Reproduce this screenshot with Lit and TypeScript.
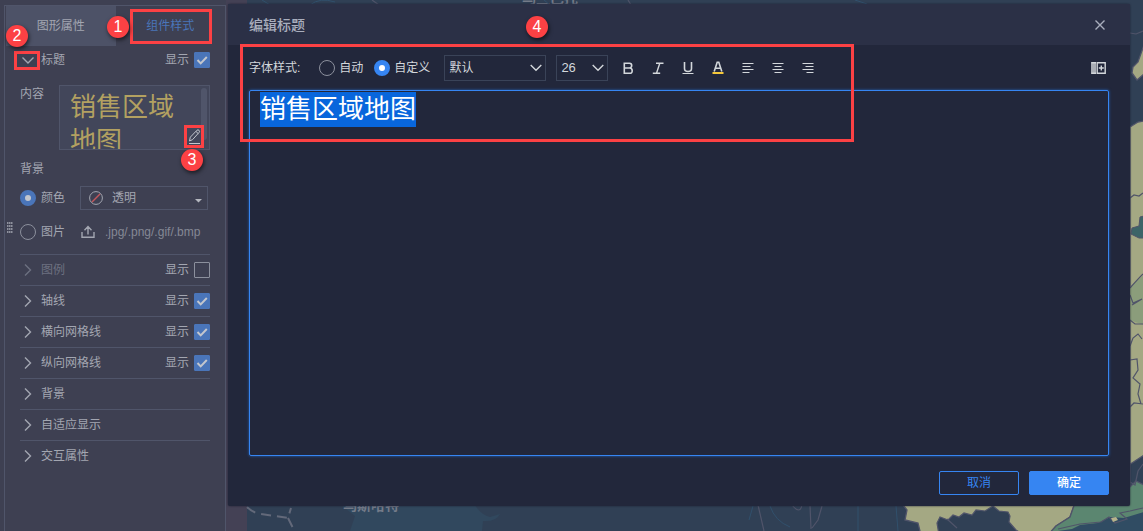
import { LitElement, html, css, svg } from "lit";
import { customElement, property, query, state } from "lit/decorators.js";
import { classMap } from "lit/directives/class-map.js";

const controls = css`
  * {
    box-sizing: border-box;
  }
  button,
  input,
  select,
  textarea {
    font: inherit;
    color: inherit;
    margin: 0;
    padding: 0;
    border: 0;
    background: none;
    border-radius: 0;
  }
  label {
    display: flex;
    align-items: center;
  }
  svg {
    display: block;
    flex: none;
    fill: none;
    stroke: currentColor;
  }
  .radio {
    appearance: none;
    width: 16px;
    height: 16px;
    border: 1px solid #8c909d;
    border-radius: 50%;
  }
  .radio:checked {
    border: 5px solid var(--accent);
    background: var(--dot);
  }
`;

/** Numbered callout marker. */
@customElement("step-badge")
class StepBadge extends LitElement {
  static styles = css`
    :host {
      display: block;
      width: 22px;
      height: 22px;
      border-radius: 50%;
      background: #fc4144;
      color: #fff;
      font: 16px/22px "Liberation Sans", Arial, sans-serif;
      text-align: center;
      box-shadow: 1px 2px 4px rgba(0, 0, 0, 0.6);
    }
  `;
  @property({ type: Number }) step = 1;
  render() {
    return html`${this.step}`;
  }
}

interface Section {
  name: string;
  toggle: boolean;
  shown: boolean;
  disabled?: boolean;
}

@customElement("style-panel")
class StylePanel extends LitElement {
  static styles = [
    controls,
    css`
      :host {
        --accent: #4a75b9;
        --dot: #c3c6cd;
        display: block;
        position: relative;
        padding: 5px 0 0 4px;
        background: #3e4052;
        color: #a3a6b1;
      }
      .body {
        height: 100%;
        border: 1px solid #50556a;
        border-bottom: 0;
      }
      .grip {
        position: absolute;
        left: 7px;
        top: 222px;
        fill: #8d909c;
        stroke: none;
      }
      .tabs {
        display: flex;
        padding-left: 1px;
      }
      .tab {
        flex: 1;
        height: 40px;
        position: relative;
      }
      .tab.idle {
        background: #4d5267;
      }
      .tab.current {
        color: #4a75b9;
      }
      .frame {
        position: absolute;
        border: 3px solid #fc4144;
        pointer-events: none;
      }
      .tab .frame {
        inset: 3px 13px 2px 14px;
      }
      .content {
        padding: 0 15px;
      }
      .row {
        display: flex;
        align-items: center;
        height: 30px;
        position: relative;
      }
      .section {
        border-top: 1px solid #50556a;
        height: 31px;
      }
      .head {
        display: flex;
        align-items: center;
        gap: 5px;
        flex: 1;
      }
      .section.off .head {
        color: #6d7080;
      }
      .show {
        gap: 5px;
      }
      .check {
        appearance: none;
        width: 16px;
        height: 16px;
        border: 1px solid #8c909d;
        border-radius: 1px;
      }
      .check:checked {
        border-color: #4a75b9;
        background: #4a75b9
          url("data:image/svg+xml,%3Csvg xmlns='http://www.w3.org/2000/svg' viewBox='0 0 14 14'%3E%3Cpath d='M2.5 7l3.2 3.4L11.8 4' fill='none' stroke='%23c3c6cd' stroke-width='2'/%3E%3C/svg%3E");
      }
      .titlerow {
        height: 28px;
      }
      .titlerow .frame {
        left: -6px;
        top: 5px;
        width: 26px;
        height: 19px;
      }
      .contentrow {
        display: flex;
        justify-content: space-between;
        padding-top: 11px;
      }
      .preview {
        position: relative;
        width: 151px;
        height: 65px;
        border: 1px solid #50556a;
        background: #42465a;
      }
      .previewtext {
        height: 100%;
        overflow: hidden;
        padding: 4px 20px 0 10px;
        color: #b3a161;
        font-size: 26px;
        line-height: 34px;
      }
      .thumb {
        position: absolute;
        right: 2px;
        top: 2px;
        width: 6px;
        height: 52px;
        border-radius: 3px;
        background: #50556a;
      }
      .edit {
        position: absolute;
        right: 5px;
        bottom: 1px;
        width: 20px;
        height: 23px;
        border: 3px solid #fc4144;
        color: #c3c6cd;
      }
      .subtitle {
        margin-top: 9px;
        height: 20px;
        line-height: 20px;
      }
      .choice {
        gap: 5px;
        width: 60px;
      }
      .fillrow {
        margin-top: 4px;
      }
      .imagerow {
        margin: 4px 0 7px;
      }
      .fill {
        display: flex;
        align-items: center;
        gap: 9px;
        width: 128px;
        height: 24px;
        border: 1px solid #50556a;
        padding: 0 5px 0 8px;
      }
      .fill select {
        appearance: none;
        flex: 1;
        min-width: 0;
      }
      .slash {
        stroke: #c4575c;
        stroke-width: 1.4;
      }
      .caret {
        margin-top: 6px;
        fill: #b5b8c0;
        stroke: none;
      }
      .upload {
        display: flex;
        align-items: center;
        gap: 9px;
        color: #a3a6b1;
        cursor: pointer;
      }
      .formats {
        color: #858895;
      }
      .b2,
      .b3 {
        position: absolute;
        z-index: 3;
      }
      .b2 {
        left: 6px;
        top: 25px;
      }
      .b3 {
        left: 121px;
        top: 63px;
      }
    `,
  ];

  @state() private sections: Section[] = [
    { name: "图例", toggle: true, shown: false, disabled: true },
    { name: "轴线", toggle: true, shown: true },
    { name: "横向网格线", toggle: true, shown: true },
    { name: "纵向网格线", toggle: true, shown: true },
    { name: "背景", toggle: false, shown: false },
    { name: "自适应显示", toggle: false, shown: false },
    { name: "交互属性", toggle: false, shown: false },
  ];

  private section(s: Section) {
    return html`<div class=${classMap({ row: true, section: true, off: !!s.disabled })}>
      <button class="head">
        <svg width="16" height="16" stroke-width="1.4"><path d="M5 2.5L10.5 8L5 13.5" /></svg>
        ${s.name}
      </button>
      ${s.toggle
        ? html`<label class="show">显示<input class="check" type="checkbox" .checked=${s.shown} /></label>`
        : ""}
    </div>`;
  }

  render() {
    return html`
      <div class="body">
        <div class="tabs">
          <button class="tab idle">图形属性</button>
          <button class="tab current">组件样式<span class="frame"></span></button>
        </div>
        <div class="content">
          <div class="row titlerow">
            <button class="head">
              <svg width="16" height="16" stroke-width="1.4"><path d="M2.5 5.5L8 11L13.5 5.5" /></svg>
              标题
            </button>
            <label class="show">显示<input class="check" type="checkbox" checked /></label>
            <span class="frame"></span>
          </div>
          <div class="contentrow">
            <span>内容</span>
            <div class="preview">
              <div class="previewtext">销售区域地图</div>
              <span class="thumb"></span>
              <button class="edit" aria-label="编辑">
                <svg width="14" height="17">
                  <path d="M2.5 13l.8-3.8L10 2.2q1-.8 2 .1t.2 2L5.6 11.6zM9 3.5l2.3 2.2M2 15.5h11" />
                </svg>
              </button>
              <step-badge class="b3" step="3"></step-badge>
            </div>
          </div>
          <div class="subtitle">背景</div>
          <div class="row fillrow">
            <label class="choice"><input class="radio" type="radio" name="bg" checked />颜色</label>
            <div class="fill">
              <svg width="14" height="14">
                <circle cx="7" cy="7" r="6.4" />
                <path class="slash" d="M3 11L11 3" />
              </svg>
              <select aria-label="颜色">
                <option>透明</option>
              </select>
              <svg class="caret" width="7" height="4"><path d="M0 0h7L3.5 3.5z" /></svg>
            </div>
          </div>
          <div class="row imagerow">
            <label class="choice"><input class="radio" type="radio" name="bg" />图片</label>
            <button class="upload">
              <svg width="16" height="14" stroke-width="1.4">
                <path d="M2 7v5.3h12V7M8 9.5V2M4.5 5.2L8 1.6L11.5 5.2" />
              </svg>
              <span class="formats">.jpg/.png/.gif/.bmp</span>
            </button>
          </div>
          ${this.sections.map((s) => this.section(s))}
        </div>
      </div>
      <svg class="grip" width="7" height="12">
        ${[0, 3, 6, 9].map((y) => [0, 2, 4].map((x) => svg`<rect x=${x} y=${y} width="1.5" height="2" />`))}
      </svg>
      <step-badge class="b2" step="2"></step-badge>
    `;
  }
}

@customElement("map-backdrop")
class MapBackdrop extends LitElement {
  static styles = css`
    :host {
      display: block;
    }
    svg {
      display: block;
      width: 100%;
      height: 100%;
      fill: none;
    }
    .place {
      font: bold 14px "Noto Sans CJK SC", sans-serif;
      fill: #747b89;
    }
    .land {
      fill: #a4a883;
      stroke: #50546a;
      stroke-width: 1.3;
    }
    .green {
      fill: #5b8670;
      stroke: #50546a;
      stroke-width: 1.3;
    }
    .line {
      stroke: #50546a;
      stroke-width: 1.2;
    }
    .river {
      stroke: #31506c;
    }
    .dash {
      stroke: #63697a;
      stroke-width: 2;
      stroke-dasharray: 10 6;
    }
  `;
  render() {
    return html`<svg viewBox="226 0 917 531" preserveAspectRatio="xMaxYMin slice" aria-hidden="true">
      <path fill="#304055" d="M226 0h917v531H226z" />
      <path fill="#444155" d="M226 0h21v531h-21z" />
      <path class="dash" d="M247 507q6 6 14 7l27 4l3-10M288 518l6 12" />
      <path fill="#31485e" d="M341 505h134q6 10 15 12l10-3q-4 8-17 7l-1 10H350l5-15z" />
      <text class="place" x="343" y="510">乌斯哈特</text>
      <text class="place" x="522" y="3">乌兰巴托</text>
      <path class="river" d="M262 0l8 5M310 5q10-8 25-3M544 0l6 5M855 0l12 4M300 516M753 506l-4 14M770 506q5 15 20 21M858 506v25M896 506l2 25" />
      <path class="line" d="M758 505l6 26M792 505q8 10 10 0M810 505l1 24M822 506l-4 14l-6 8M372 0l7 5M628 0l3 5" />
      <path
        class="land"
        d="M899 500L907 510L905 520L918 523L921 535H1048L1056 526L1070 517L1076 500L1144 455V121L1138 122L1130 127V500z"
      />
      <path
        fill="#304055"
        class="line"
        d="M939 535l-2-12l3-6l8 3l5-5l6 2l5-4l8 2l4-5l9 1l8-5l6 5l9 1l2 4l-1 6l7 8l8 5zM947 519l10 9"
      />
      <path class="green" d="M1048 535l8-9l14-9l6-17l54-13l6-6l8 4v51z" />
      <path fill="#304c63" d="M1058 531l14-2l8-4l18-2l12-6l14 1l20-6v19z" />
      <path class="line" d="M1058 529l22-5l21-2l8-5l6 6l12-4l-7-6l10-2l13-3" />
      <path fill="#b6b38b" d="M1111 518l5-1l2 3l-5 2z" />
      <path class="line" d="M1130 33l6 1l7-3" />
      <path class="land" d="M1144 45l-6 17l-5 5l-1 6l5 7l7-6z" />
      <path fill="#8b9d7b" d="M1130 287l14-12v50l-14-5z" />
      <path class="line" d="M1130 198l4-3l5 1l4-3M1130 288q9-10 13-14M1130 295l3 8l9-4l-10 6M1130 320l5 4h8M1130 346l3-8l5-4l4 5M1130 360l7-1l1 11l-5 8l7 6l-2 10l3 10M1130 407l4-4l9 1M1130 482l5 3l3-14l5-7" />
      <path fill="#3c6467" stroke="#50546a" d="M1144 216l-4 1l-1 9l-7 2l-1 6l8 4h5z" />
    </svg>`;
  }
}

@customElement("title-dialog")
class TitleDialog extends LitElement {
  static styles = [
    controls,
    css`
      :host {
        --accent: #3685f2;
        --dot: #fff;
        display: flex;
        flex-direction: column;
        position: relative;
        background: #22273b;
        border-radius: 2px;
        color: #d3d7db;
        box-shadow: 0 0 2px #1a1e2e;
      }
      .header {
        display: flex;
        align-items: center;
        justify-content: space-between;
        height: 41px;
        padding: 0 22px 0 21px;
        background: #2b3046;
        color: #a9aebd;
      }
      .title {
        margin: 0;
        font-size: 14px;
        font-weight: 500;
      }
      .toolbar {
        display: flex;
        align-items: center;
        height: 45px;
        padding: 0 21px;
      }
      .options {
        display: flex;
        gap: 11px;
        margin: 0 14px 0 19px;
      }
      .options label {
        gap: 4px;
      }
      .picker {
        height: 26px;
        margin-right: 10px;
        padding: 0 24px 0 4px;
        border: 1px solid #3a4358;
        appearance: none;
        background: url("data:image/svg+xml,%3Csvg xmlns='http://www.w3.org/2000/svg' width='12' height='8'%3E%3Cpath d='M.7 1L6 6.3 11.3 1' fill='none' stroke='%23d3d7db' stroke-width='1.4'/%3E%3C/svg%3E")
          no-repeat right 3px center;
      }
      .family {
        width: 102px;
      }
      .size {
        width: 52px;
        margin-right: 5px;
        font-size: 13px;
      }
      .tool {
        display: grid;
        place-items: center;
        width: 30px;
        height: 30px;
      }
      .ink {
        stroke: #f5c73a;
        stroke-width: 2;
      }
      .spacer {
        flex: 1;
      }
      .editor {
        flex: 1;
        margin: 0 21px;
        padding: 1px 10px;
        min-height: 120px;
        border: 1px solid #3685f2;
        border-radius: 2px;
        outline: none;
        box-shadow: 0 0 3px #2463b8;
        resize: none;
        color: #fff;
        font-size: 26px;
        line-height: 35px;
      }
      .editor::selection {
        background: #0866dc;
        color: #fff;
      }
      .footer {
        display: flex;
        justify-content: flex-end;
        gap: 10px;
        padding: 15px 21px 11px;
      }
      .btn {
        width: 80px;
        height: 24px;
        border: 1px solid #3685f2;
        border-radius: 2px;
        color: #3685f2;
      }
      .btn.primary {
        background: #3685f2;
        color: #fff;
        font-weight: 500;
      }
      .frame {
        position: absolute;
        left: 12px;
        top: 40px;
        width: 614px;
        height: 98px;
        border: 3px solid #fc4144;
        pointer-events: none;
      }
      .b4 {
        position: absolute;
        left: 298px;
        top: 12px;
      }
    `,
  ];

  @query(".editor") private editor!: HTMLTextAreaElement;

  firstUpdated() {
    this.editor.focus();
    this.editor.select();
  }

  private tool(name: string, shape: unknown) {
    return html`<button class="tool" aria-label=${name}>
      <svg width="16" height="16">${shape}</svg>
    </button>`;
  }

  render() {
    return html`
      <div class="header">
        <h1 class="title">编辑标题</h1>
        <button aria-label="关闭">
          <svg width="16" height="16" stroke-width="1.4"><path d="M3.5 3.5l9 9M12.5 3.5l-9 9" /></svg>
        </button>
      </div>
      <div class="toolbar">
        <span>字体样式:</span>
        <div class="options">
          <label><input class="radio" type="radio" name="mode" />自动</label>
          <label><input class="radio" type="radio" name="mode" checked />自定义</label>
        </div>
        <select class="picker family" aria-label="字体">
          <option>默认</option>
        </select>
        <select class="picker size" aria-label="字号">
          <option>26</option>
        </select>
        ${this.tool("加粗", svg`<path stroke-width="1.6" d="M4.3 3.3h5.2q2.2 0 2.2 2.3T9.5 8H4.3zM4.3 8h5.4q2.5 0 2.5 2.7t-2.5 2.6H4.3z"/>`)}
        ${this.tool("斜体", svg`<path stroke-width="1.4" d="M6 3.2h7.5M2.8 13.3h7.4M9.8 3.2L6.5 13.3"/>`)}
        ${this.tool("下划线", svg`<path stroke-width="1.6" d="M4.5 2v6.5q0 3 3.5 3t3.5-3V2"/><path d="M2.5 13.5h11"/>`)}
        ${this.tool("文字颜色", svg`<path stroke-width="1.6" d="M4.2 11.5L7.2 2.3h1.6L11.8 11.5M5.2 8.3h5.6"/><path class="ink" d="M2.5 13h11"/>`)}
        ${this.tool("左对齐", svg`<path d="M2.5 3.5h11M2.5 6.5h8M2.5 9.5h11M2.5 12.5h7"/>`)}
        ${this.tool("居中", svg`<path d="M2.5 3.5h11M4.5 6.5h7M2.5 9.5h11M4.5 12.5h7"/>`)}
        ${this.tool("右对齐", svg`<path d="M2.5 3.5h11M5.5 6.5h8M2.5 9.5h11M6.5 12.5h7"/>`)}
        <span class="spacer"></span>
        <button aria-label="插入字段">
          <svg width="18" height="14">
            <path fill="#a9adb4" stroke="none" d="M0 1h5v12H0z" />
            <path stroke-width="1.4" d="M.5 1.7h4.5M.5 12.3h4.5M6.2 1.7h8v10.6h-8zM10.3 4.5v5M7.8 7h5" />
          </svg>
        </button>
      </div>
      <textarea class="editor" aria-label="标题内容" spellcheck="false" .value=${"销售区域地图"}></textarea>
      <div class="footer">
        <button class="btn">取消</button>
        <button class="btn primary">确定</button>
      </div>
      <span class="frame"></span>
      <step-badge class="b4" step="4"></step-badge>
    `;
  }
}

@customElement("app-root")
class AppRoot extends LitElement {
  static styles = css`
    :host {
      display: grid;
      grid-template-columns: 226px minmax(0, 1fr);
      position: relative;
      min-height: 100vh;
      font: 12px/18px "Liberation Sans", "Noto Sans CJK SC", sans-serif;
    }
    .stage {
      display: flex;
      position: relative;
      padding: 4px 13px 25px 2px;
    }
    .map {
      position: absolute;
      inset: 0;
    }
    .dialog {
      flex: 1;
      min-width: 0;
    }
    .b1 {
      position: absolute;
      left: 107px;
      top: 16px;
    }
  `;
  render() {
    return html`
      <style-panel></style-panel>
      <main class="stage">
        <map-backdrop class="map"></map-backdrop>
        <title-dialog class="dialog"></title-dialog>
      </main>
      <step-badge class="b1" step="1"></step-badge>
    `;
  }
}
